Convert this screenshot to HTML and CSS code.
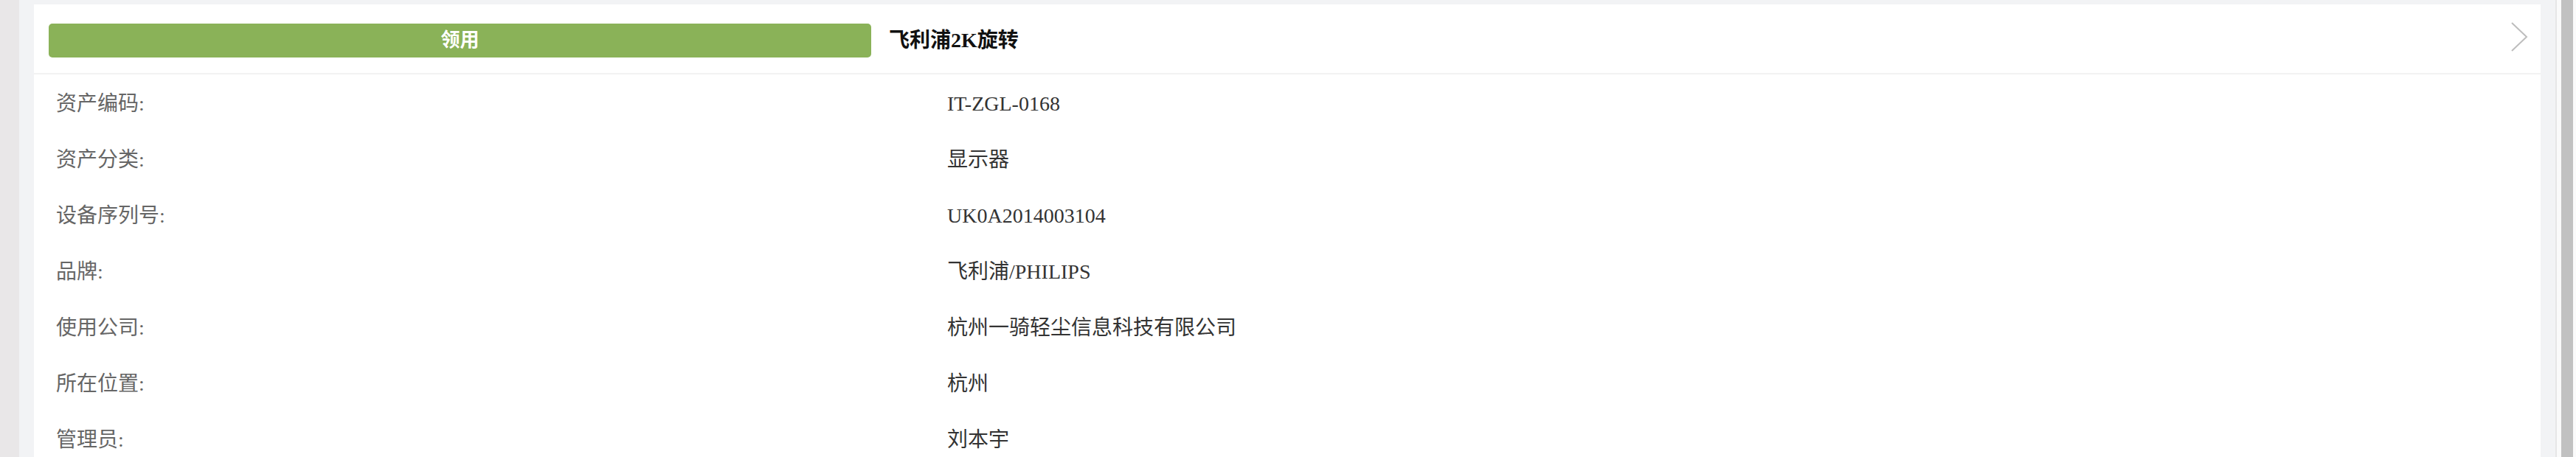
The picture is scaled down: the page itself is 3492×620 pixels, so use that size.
FILE: index.html
```html
<!DOCTYPE html>
<html lang="zh-CN">
<head>
<meta charset="utf-8">
<title>资产详情</title>
<link rel="stylesheet" href="styles.css">
</head>
<body>
<div class="page">
  <div class="side"></div>
  <div class="main">
    <div class="card">
      <div class="header">
        <div class="btn">领用</div>
        <div class="title">飞利浦2K旋转</div>
        <svg class="chev" width="24" height="40" viewBox="0 0 24 40"><path d="M2 1 L22 20 L2 39" fill="none" stroke="#bdbdbd" stroke-width="2"/></svg>
      </div>
      <div class="rows">
        <div class="row"><span class="label">资产编码:</span><span class="value">IT-ZGL-0168</span></div>
        <div class="row"><span class="label">资产分类:</span><span class="value">显示器</span></div>
        <div class="row"><span class="label">设备序列号:</span><span class="value">UK0A2014003104</span></div>
        <div class="row"><span class="label">品牌:</span><span class="value">飞利浦/PHILIPS</span></div>
        <div class="row"><span class="label">使用公司:</span><span class="value">杭州一骑轻尘信息科技有限公司</span></div>
        <div class="row"><span class="label">所在位置:</span><span class="value">杭州</span></div>
        <div class="row"><span class="label">管理员:</span><span class="value">刘本宇</span></div>
      </div>
    </div>
  </div>
  <div class="scroll"><div class="thumb"></div></div>
</div>
</body>
</html>
```

FILE: styles.css
```css
* { box-sizing: border-box; }
html, body { margin: 0; padding: 0; }
body {
  font-family: "Liberation Serif", "Noto Sans CJK SC", serif;
  background: #f2f3f5;
  overflow: hidden;
}
.page {
  display: flex;
  height: 620px;
  overflow: hidden;
}
.side {
  width: 26px;
  flex: none;
  background: #e9e7e8;
}
.main {
  flex: 1;
  background: #f2f3f5;
  padding: 6px 20px 0 20px;
  min-width: 0;
}
.card {
  background: #fff;
  height: 100%;
}
.header {
  display: flex;
  align-items: flex-start;
  height: 95px;
  padding: 26px 0 0 20px;
  border-bottom: 2px solid #f2f2f2;
}
.btn {
  width: 1115px;
  height: 46px;
  flex: none;
  border-radius: 5px;
  background: #8ab258;
  color: #fff;
  font-size: 26px;
  font-weight: bold;
  line-height: 46px;
  text-align: center;
}
.title {
  margin-left: 24px;
  font-size: 28px;
  font-weight: bold;
  line-height: 46px;
  color: #111;
}
.chev {
  margin-left: auto;
  margin-right: 17px;
  margin-top: -2px;
  flex: none;
}
.rows {
  padding: 2px 0 0 30px;
}
.row {
  display: grid;
  grid-template-columns: 1208px 1fr;
  height: 76px;
  line-height: 76px;
  font-size: 28px;
}
.label { color: #666; }
.value { color: #333; }
.scroll {
  width: 28px;
  flex: none;
  background: #fafafa;
  border-left: 2px solid #e6e6e6;
  padding: 0 4px 0 6px;
}
.thumb {
  height: 100%;
  background: #c1c1c1;
}
```
